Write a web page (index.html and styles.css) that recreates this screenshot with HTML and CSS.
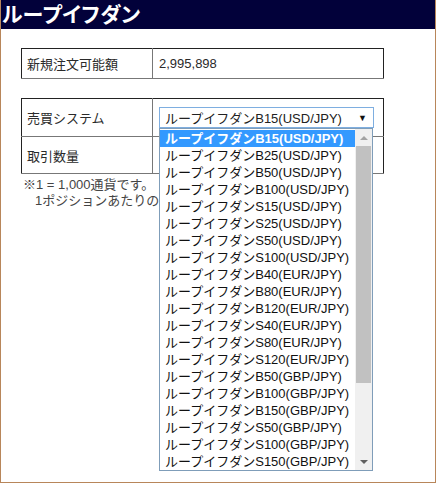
FILE: index.html
```html
<!DOCTYPE html>
<html lang="ja">
<head>
<meta charset="utf-8">
<title>ループイフダン</title>
<link rel="stylesheet" href="styles.css">
</head>
<body>
<div class="frame">
  <div class="header"><h1 class="title">ループイフダン</h1></div>
  <div class="content">
    <table class="grid">
      <tr class="row-a">
        <th class="label">新規注文可能額</th>
        <td class="value">2,995,898</td>
      </tr>
    </table>
    <table class="grid grid-2">
      <tr class="row-b">
        <th class="label">売買システム</th>
        <td class="value">
          <div class="select-wrap">
            <div class="select">
              <span class="select-text">ループイフダンB15(USD/JPY)</span>
              <span class="select-arrow">▼</span>
            </div>
            <div class="dropdown">
              <ul class="options">
                <li class="opt selected">ループイフダンB15(USD/JPY)</li>
                <li class="opt">ループイフダンB25(USD/JPY)</li>
                <li class="opt">ループイフダンB50(USD/JPY)</li>
                <li class="opt">ループイフダンB100(USD/JPY)</li>
                <li class="opt">ループイフダンS15(USD/JPY)</li>
                <li class="opt">ループイフダンS25(USD/JPY)</li>
                <li class="opt">ループイフダンS50(USD/JPY)</li>
                <li class="opt">ループイフダンS100(USD/JPY)</li>
                <li class="opt">ループイフダンB40(EUR/JPY)</li>
                <li class="opt">ループイフダンB80(EUR/JPY)</li>
                <li class="opt">ループイフダンB120(EUR/JPY)</li>
                <li class="opt">ループイフダンS40(EUR/JPY)</li>
                <li class="opt">ループイフダンS80(EUR/JPY)</li>
                <li class="opt">ループイフダンS120(EUR/JPY)</li>
                <li class="opt">ループイフダンB50(GBP/JPY)</li>
                <li class="opt">ループイフダンB100(GBP/JPY)</li>
                <li class="opt">ループイフダンB150(GBP/JPY)</li>
                <li class="opt">ループイフダンS50(GBP/JPY)</li>
                <li class="opt">ループイフダンS100(GBP/JPY)</li>
                <li class="opt">ループイフダンS150(GBP/JPY)</li>
              </ul>
              <div class="scrollbar">
                <div class="sb-btn"><span class="tri tri-up"></span></div>
                <div class="sb-track"><div class="sb-thumb"></div></div>
                <div class="sb-btn"><span class="tri tri-down"></span></div>
              </div>
            </div>
          </div>
        </td>
      </tr>
      <tr class="row-c">
        <th class="label">取引数量</th>
        <td class="value"></td>
      </tr>
    </table>
    <p class="note">※1 = 1,000通貨です。</p>
    <p class="note note-indent">1ポジションあたりの数</p>
  </div>
</div>
</body>
</html>
```
FILE: styles.css
```css
html, body {
  margin: 0;
  padding: 0;
  background: #ffffff;
}
body {
  font-family: "Liberation Sans", "Noto Sans CJK JP", sans-serif;
  color: #2a2a2a;
  font-size: 13px;
}
.frame {
  width: 436px;
  height: 483px;
  border-left: 1px solid #b8865a;
  border-right: 1px solid #b8865a;
  border-bottom: 1px solid #b8865a;
  box-sizing: border-box;
  overflow: hidden;
  background: #ffffff;
}
.header {
  background: #02013a;
  height: 29px;
  display: flex;
  align-items: center;
}
.title {
  margin: 0;
  padding-left: 1px;
  color: #ffffff;
  font-size: 21px;
  font-weight: bold;
  line-height: 29px;
  font-feature-settings: "palt";
  letter-spacing: 0.4px;
}
.content {
  padding: 19px 0 0 20px;
  position: relative;
}
.grid {
  border-collapse: collapse;
  width: 363px;
  border: 1px solid #222222;
}
.grid-2 {
  margin-top: 19px;
}
.label {
  width: 125px;
  text-align: left;
  font-weight: normal;
  padding: 0 0 0 5px;
  border-right: 1px solid #777777;
  border-bottom: 1px solid #777777;
  vertical-align: middle;
}
.value {
  padding: 0 0 0 6px;
  border-bottom: 1px solid #777777;
  vertical-align: middle;
}
.row-a {
  height: 30px;
}
.row-b {
  height: 38px;
}
.row-c {
  height: 37px;
}
.select-wrap {
  position: relative;
  width: 215px;
}
.select {
  height: 21px;
  box-sizing: border-box;
  border: 1px solid #7eaee0;
  display: flex;
  align-items: center;
  justify-content: space-between;
  padding: 0 6px 0 5px;
  background: #ffffff;
  font-size: 13px;
  color: #222222;
}
.select-arrow {
  font-size: 9px;
  color: #111111;
}
.dropdown {
  position: absolute;
  left: 0;
  top: 21px;
  width: 214px;
  height: 343px;
  box-sizing: border-box;
  border: 1px solid #7f9db9;
  background: #ffffff;
  display: flex;
  z-index: 5;
}
.options {
  list-style: none;
  margin: 0;
  padding: 1px 0 0 0;
  flex: 1;
}
.opt {
  height: 17px;
  line-height: 17px;
  padding-left: 5px;
  color: #111111;
  white-space: nowrap;
  font-size: 13px;
}
.opt.selected {
  background: #3399ff;
  color: #ffffff;
  font-weight: bold;
}
.scrollbar {
  width: 17px;
  display: flex;
  flex-direction: column;
  background: #f0f0f0;
}
.sb-btn {
  height: 17px;
  display: flex;
  align-items: center;
  justify-content: center;
}
.sb-track {
  flex: 1;
}
.sb-thumb {
  height: 237px;
  background: #c1c1c1;
  margin: 0 1px;
}
.tri {
  width: 0;
  height: 0;
  border-left: 4px solid transparent;
  border-right: 4px solid transparent;
}
.tri-up {
  border-bottom: 4px solid #a3a3a3;
}
.tri-down {
  border-top: 4px solid #606060;
}
.note {
  margin: 0;
  padding-left: 2px;
  line-height: 16px;
  color: #444444;
}
.note:first-of-type {
  margin-top: 3px;
}
.note-indent {
  padding-left: 14px;
  white-space: nowrap;
}
```
